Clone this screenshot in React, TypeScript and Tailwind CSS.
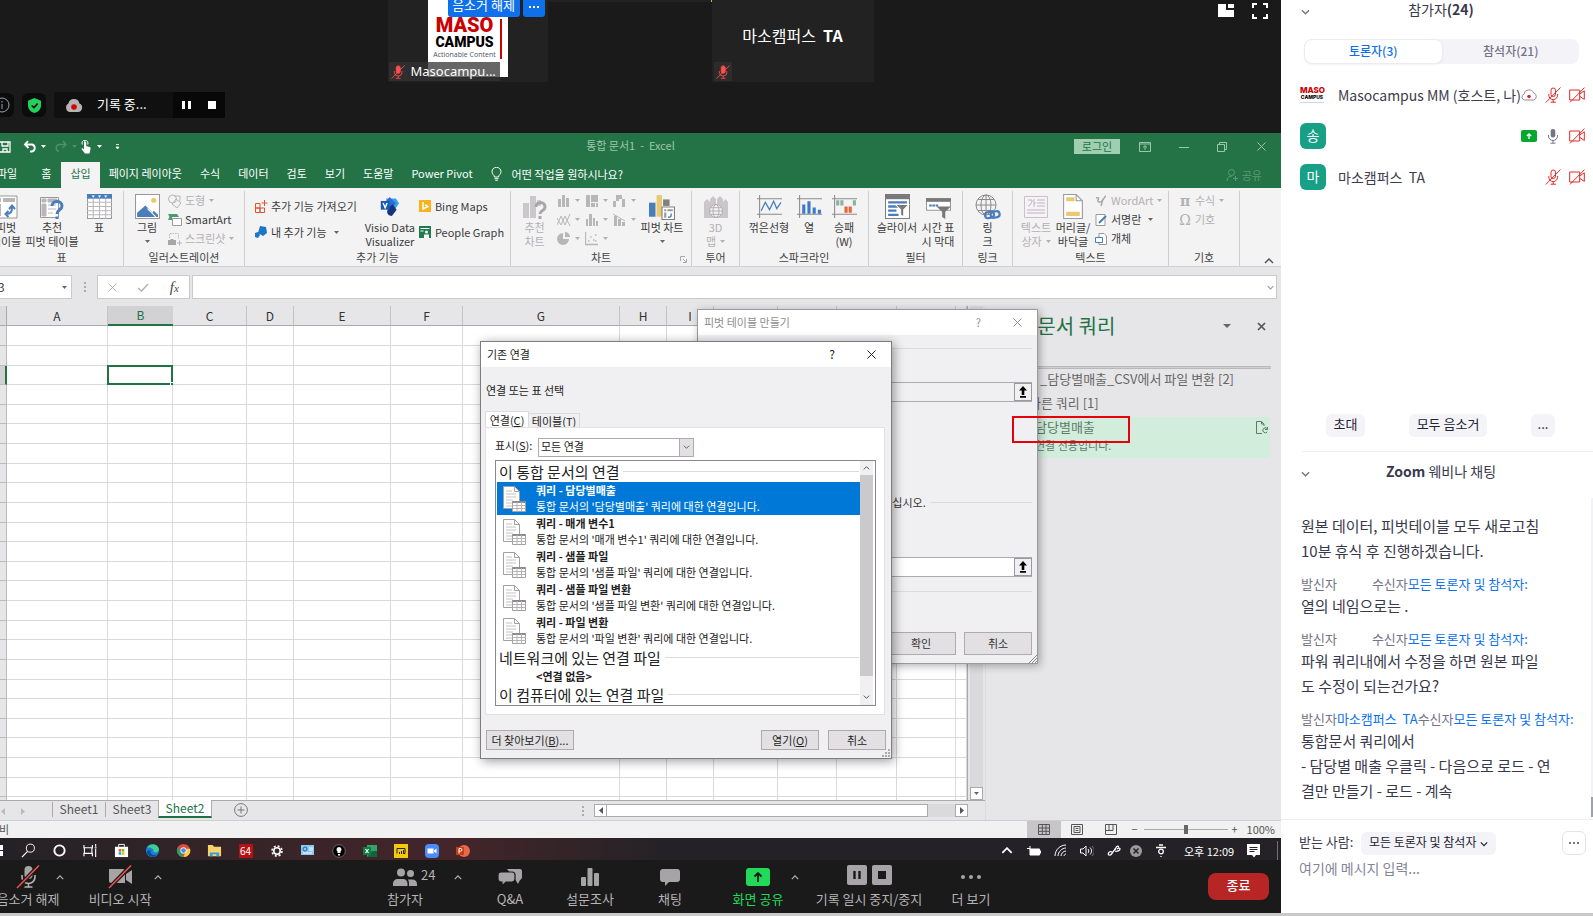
import { useState } from 'react'
import type { ReactNode } from 'react'

const FONT = "font-['Noto_Sans_CJK_KR','Noto_Sans',sans-serif]"
const UI_FONT = "font-['Noto_Sans','Noto_Sans_CJK_KR',sans-serif]"

interface IconProps { className?: string; box?: string; children: ReactNode }

function Icon({ className = 'size-6', box = '0 0 24 24', children }: IconProps) {
  return (
    <svg className={`${className} shrink-0`} viewBox={box} fill="none" stroke="currentColor" aria-hidden="true">
      {children}
    </svg>
  )
}

function Caret({ className = 'text-[#666]' }: { className?: string }) {
  return (
    <Icon className={`w-[5px] h-[3px] ${className}`} box="0 0 5 3">
      <path d="M0 0h5L2.5 3z" fill="currentColor" stroke="none" />
    </Icon>
  )
}

function Chevron({ className, up }: { className?: string; up?: boolean }) {
  return (
    <Icon className={className} box="0 0 10 6">
      <path d={up ? 'M1 5l4-4 4 4' : 'M1 1l4 4 4-4'} strokeWidth="1.5" />
    </Icon>
  )
}

function Close({ className = 'size-[9px]' }: { className?: string }) {
  return (
    <Icon className={className} box="0 0 10 10">
      <path d="M.5.5l9 9M9.5.5l-9 9" strokeWidth="1.1" />
    </Icon>
  )
}

/* ---------- Meeting icons ---------- */

function MicOffSmall({ className = 'size-4 text-[#e02828]', solid }: { className?: string; solid?: boolean }) {
  return (
    <Icon className={className} box="0 0 16 16">
      <rect x="6" y="1" width="4.5" height="8.5" rx="2.2" fill={solid ? 'currentColor' : 'none'} />
      <path d="M3.8 7v1.2a4.4 4.4 0 0 0 8.8 0V7M8.2 12.6V15M5.5 15.2h5.4M15.5.5L.8 15.5" />
    </Icon>
  )
}

function CamOffSmall() {
  return (
    <Icon className="size-4 text-[#e02828]" box="0 0 16 16">
      <path d="M.7 3h10v10h-10zM10.7 7l4.6-3.2v8.6L10.7 9.3M15.5.6L1 15.4" />
    </Icon>
  )
}

function MasoLogo() {
  return (
    <div className="w-6 text-center font-['Inter','Noto_Sans',sans-serif] font-extrabold">
      <div className="text-[8px] leading-[7px] text-[#c00]">MASO</div>
      <div className="-mx-1 text-[5px] leading-[6px] text-black">CAMPUS</div>
      <div className="mx-auto mt-0.5 h-px w-6 bg-gray-300" />
    </div>
  )
}

function VideoStrip() {
  return (
    <header className="relative flex h-[133px] shrink-0 flex-col justify-between bg-[#1a1a1a] text-white">
      <div className="flex justify-center pr-5">
        <div className="relative flex h-[82px] w-40 justify-center bg-[#222]">
          <div className="flex h-[77px] w-20 bg-white pt-[17px] pl-0.5">
            <div className="w-[70px] text-center">
              <div className="font-['Roboto',sans-serif] text-xl leading-[17px] font-black text-[#c00]">MASO</div>
              <div className="font-['Roboto',sans-serif] text-sm leading-4 font-black text-black">CAMPUS</div>
              <div className="font-['Open_Sans',sans-serif] text-[7px] leading-[9px] text-gray-600">Actionable Content</div>
            </div>
            <div className="mt-0.5 h-10 w-0.5 bg-[#c00]" />
          </div>
          <div className="absolute top-0 right-[3px] flex gap-[3px]">
            <button className="h-[17px] w-[72px] rounded-b-[3px] bg-[#0e71eb] pb-[7px] text-[13px] leading-[10px] whitespace-nowrap">음소거 해제</button>
            <button className="flex h-[17px] w-[22px] items-center justify-center gap-0.5 rounded-b-[3px] bg-[#0e71eb] pb-1" aria-label="더 보기">
              <i className="size-0.5 bg-white" /><i className="size-0.5 bg-white" /><i className="size-0.5 bg-white" />
            </button>
          </div>
          <div className={`absolute bottom-px left-px flex h-[19px] w-[111px] items-center gap-1.5 bg-[#333]/75 pl-0.5 ${UI_FONT} text-[13px]`}>
            <MicOffSmall className="size-[14px] text-[#ff4d4d]" solid />
            Masocampu...
          </div>
        </div>
        <div className="h-0.5 w-[164px] border-r border-[#9acd32] bg-[#222]" />
        <div className="relative flex h-[82px] w-[162px] items-center justify-center bg-[#222] pb-3 text-base">
          <span>마소캠퍼스&nbsp; <b>TA</b></span>
          <div className="absolute bottom-px left-0.5 flex h-[19px] w-[18px] items-center justify-center bg-[#2c2c2c]">
            <MicOffSmall className="size-[14px] text-[#ff4d4d]" solid />
          </div>
        </div>
      </div>
      <div className="absolute top-[3px] right-[13px] flex items-center gap-[18px]">
        <Icon className="size-4" box="0 0 16 16">
          <path d="M0 1h8v6h8v7H0zM10 1h6v4h-6z" fill="#fff" stroke="none" />
        </Icon>
        <Icon className="size-4" box="0 0 16 16">
          <path d="M1 5V1h4M11 1h4v4M15 11v4h-4M5 15H1v-4" strokeWidth="2" />
        </Icon>
      </div>
      <div className="mb-[15px] flex items-center gap-2">
        <div className="flex h-6 w-[14px] items-center justify-end rounded-r-md bg-[#0c0c0c] pr-1">
          <Icon className="size-4 text-gray-400" box="0 0 16 16">
            <circle cx="8" cy="8" r="7" /><path d="M8 7v5M8 4v1.6" />
          </Icon>
        </div>
        <div className="flex size-6 items-center justify-center rounded-md bg-[#0c0c0c]">
          <Icon className="h-[15px] w-[13px]" box="0 0 14 16">
            <path d="M7 0l7 3v5c0 4-3 7-7 8-4-1-7-4-7-8V3z" fill="#22d15a" stroke="none" />
            <path d="M4 8l2.4 2.3L10.4 6" stroke="#0c0c0c" strokeWidth="1.8" />
          </Icon>
        </div>
        <div className="flex h-[26px] w-[171px] items-center rounded-xs bg-[#101010] pl-[11px]">
          <Icon className="h-[15px] w-[18px]" box="0 0 18 15">
            <path d="M5 14a4.5 4.5 0 0 1-1.6-8.4A5.7 5.7 0 0 1 14.5 5.4 4.5 4.5 0 0 1 13 14z" fill="#b4b4b4" stroke="none" />
            <circle cx="9" cy="9" r="2.8" fill="#d90000" stroke="none" />
          </Icon>
          <span className="ml-[14px] flex-1 pb-0.5 text-[13px]">기록 중...</span>
          <div className="flex h-full w-[52px] items-center justify-around bg-[#080808]">
            <button className="flex gap-[3px]" aria-label="일시 중지"><i className="h-2 w-[3px] bg-white" /><i className="h-2 w-[3px] bg-white" /></button>
            <button className="size-2 bg-white" aria-label="중지" />
          </div>
        </div>
      </div>
    </header>
  )
}

/* ---------- Excel ---------- */

function TitleBar() {
  return (
    <div className="grid h-[27px] grid-cols-[1fr_auto_1fr] items-center bg-[#237346] text-[#9cc7ad]">
      <div className="flex items-center gap-2 text-white">
        <Icon className="h-3 w-[11px]" box="0 0 11 12">
          <path d="M0 1h10v10H0M2 1v4h6V1M3 11V8h4v3" strokeWidth="1.3" />
        </Icon>
        <div className="ml-1 flex items-center gap-1">
          <Icon className="size-[14px]" box="0 0 14 14"><path d="M5 1L2 4.5 5.5 8M2 4.5h7a3.6 3.6 0 0 1 0 7H7" strokeWidth="1.9" /></Icon>
          <Caret className="text-white" />
        </div>
        <div className="flex items-center gap-1 text-[#4f8f6b]">
          <Icon className="size-[14px]" box="0 0 14 14"><path d="M9 1l3 3.5L8.5 8M12 4.5H5a3.6 3.6 0 0 0 0 7" strokeWidth="1.5" /></Icon>
          <Caret className="text-[#4f8f6b]" />
        </div>
        <div className="-ml-1.5 flex items-center gap-1">
          <Icon className="size-[14px]" box="0 0 14 14">
            <path d="M5 1.5c1.5-.8 2.5.4 2.200 1.500V6l3.500 1c1 .3 1 1 .8 2l-1 4.500H6L2.500 9c0-1 1-1.200 2.500.5z" fill="currentColor" stroke="none" />
            <path d="M3.300 4.500a3 3 0 1 1 5.400 0" />
          </Icon>
          <Caret className="text-white" />
        </div>
        <Icon className="ml-1 h-[6px] w-[7px]" box="0 0 7 6"><path d="M2 .5h3M2 3h3L3.500 5z" fill="currentColor" strokeWidth=".8" /></Icon>
      </div>
      <div className="mr-5 pb-0.5 text-[11px]">통합 문서1 &nbsp;- &nbsp;Excel</div>
      <div className="flex items-center justify-end pr-[15px]">
        <button className="h-[15px] w-[46px] bg-[#9fceb1] pb-px text-[11px] leading-[14px] text-[#237346]">로그인</button>
        <Icon className="ml-[19px] h-[10px] w-3" box="0 0 12 10"><path d="M.5.500h11v9H.5zM.5 2h11M6 8V4M4 5.500L6 3.600l2 1.900" /></Icon>
        <Icon className="ml-7 h-[10px] w-[10px]" box="0 0 10 10"><path d="M0 5.500h10" /></Icon>
        <Icon className="ml-7 h-[10px] w-[10px]" box="0 0 10 10"><path d="M.5 2.500h7v7h-7zM2.500 2V.5h7v7H8" /></Icon>
        <div className="ml-[30px]"><Close /></div>
      </div>
    </div>
  )
}

const TABS = ['홈', '삽입', '페이지 레이아웃', '수식', '데이터', '검토', '보기', '도움말', 'Power Pivot']

function MenuTabs() {
  const [active, setActive] = useState('삽입')
  return (
    <nav className="flex h-7 items-end bg-[#237346] text-[11px] text-white">
      <button className="-ml-[3px] h-[26px] pr-[15px] pb-[3px]">파일</button>
      {TABS.map(t => (
        <button
          key={t}
          onClick={() => setActive(t)}
          className={t === active ? 'ml-px h-[26px] bg-[#f3f3f3] px-[9px] pb-[3px] text-[#217346]' : 'h-[26px] px-[9px] pb-[3px]'}
        >
          {t}
        </button>
      ))}
      <button className="ml-[9px] flex h-[26px] items-center gap-2.5 pb-0.5">
        <Icon className="h-[14px] w-[11px]" box="0 0 11 14"><path d="M3.500 10C3.500 8 1 7.500 1 4.800a4.500 4.500 0 0 1 9 0C10 7.500 7.500 8 7.500 10zM3.500 11.700h4M4.300 13.300h2.400" /></Icon>
        어떤 작업을 원하시나요?
      </button>
      <button className="mr-[19px] ml-auto flex h-[26px] items-center gap-1 text-[#5c9a77]">
        <Icon className="size-3" box="0 0 12 12"><circle cx="5.500" cy="3.500" r="3" /><path d="M1 12c0-3 2-5 5-5M7 9.500h5M9.500 7v5" /></Icon>
        공유
      </button>
    </nav>
  )
}

interface TallProps { icon: ReactNode; lines: string[]; width: string; disabled?: boolean; caret?: 'own' | 'inline' }

function Tall({ icon, lines, width, disabled, caret }: TallProps) {
  return (
    <button className={`flex shrink-0 flex-col items-center pt-[3px] whitespace-nowrap ${width} ${disabled ? 'text-[#b3b0b3]' : 'text-[#3c3c3c]'}`}>
      <span className="mb-px flex h-[25px] items-center">{icon}</span>
      {lines.map((l, i) => (
        <span key={l} className="flex items-center gap-1 leading-[14px]">
          {l}
          {caret === 'inline' && i === lines.length - 1 && <Caret className="text-[#b3b0b3]" />}
        </span>
      ))}
      {caret === 'own' && <span className="flex h-[14px] items-center"><Caret /></span>}
    </button>
  )
}

interface SmallProps { icon: ReactNode; label: string; disabled?: boolean; caret?: boolean; tall?: boolean }

function Small({ icon, label, disabled, caret, tall }: SmallProps) {
  return (
    <button className={`flex items-center gap-[3px] whitespace-nowrap ${tall ? 'h-[26px]' : 'h-[19px]'} ${disabled ? 'text-[#b3b0b3]' : 'text-[#3c3c3c]'}`}>
      <span className="flex w-[14px] justify-center">{icon}</span>
      {label}
      {caret && <Caret className={disabled ? 'ml-px text-[#b3b0b3]' : 'ml-1 text-[#666]'} />}
    </button>
  )
}

function Group({ label, width, children, launcher }: { label: string; width: string; children: ReactNode; launcher?: boolean }) {
  return (
    <section className={`relative mt-[3px] flex shrink-0 flex-col border-r border-[#cfcdcf] ${width}`}>
      <div className="flex flex-1">{children}</div>
      <div className="mb-px text-center leading-[15px] text-[#444]">{label}</div>
      {launcher && (
        <Icon className="absolute right-1 bottom-[3px] size-[7px] text-[#aaa]" box="0 0 7 7"><path d="M.5 5V.5H5M3 3l3.500 3.500M6.500 3v3.500H3" /></Icon>
      )}
    </section>
  )
}

const gray = '#b9b6b9'
const blue = '#4a7ebb'

const pivotIcon = (
  <Icon className="size-6">
    <path d="M1 1h22v22H1z" fill="#fff" stroke="#9a979a" />
    <path d="M3 3h4v4H3zM9 3h12v4H9zM3 9h4v12H3z" fill="#b9b6b9" stroke="none" />
    <path d="M12 19c5 0 6-2 6-7M15 14l3-3.500 3 3.500M14.500 16L11.500 19l3 3" stroke={blue} strokeWidth="2" />
  </Icon>
)
const suggestPivotIcon = (
  <Icon className="size-6">
    <path d="M.5 2.500h18v20H.5z" fill="#fff" stroke="#9a979a" />
    <path d="M2 4h4v3H2zM8 4h9v3H8zM2 9h4v12H2zM8 10h8M8 14h8M8 18h5" fill="#b9b6b9" stroke="#b9b6b9" />
    <path d="M12 11c0-6 10-6 10 0 0 4-5 3.500-5 8M17 21.500v3" stroke={blue} strokeWidth="3" />
  </Icon>
)
const tableIcon = (
  <Icon className="size-[25px]">
    <path d="M.5.500h23v23H.5z" fill="#fff" stroke="#9a979a" />
    <path d="M0 8h24M0 12h24M0 16h24M0 20h24M6 4v20M12 4v20M18 4v20" stroke="#b9b6b9" />
    <path d="M0 0h24v4.500H0z" fill={blue} stroke="none" />
    <path d="M4.500 1.500h3L6 3.500zM10.500 1.500h3L12 3.500zM16.500 1.500h3L18 3.500z" fill="#fff" stroke="none" />
  </Icon>
)
const pictureIcon = (
  <Icon className="size-[25px]">
    <path d="M.5.500h23v23H.5z" fill="#fff" stroke="#9a979a" />
    <path d="M2 22v-4l8-7 7 7 1-2 4 4v2z" fill={blue} stroke="none" />
    <path d="M12 14l8 8" stroke="#fff" />
    <circle cx="18" cy="6" r="2.500" fill="#ecc873" stroke="none" />
  </Icon>
)
const visioIcon = (
  <Icon className="size-[19px]">
    <path d="M8 2h12l4 6-4 6H8z" fill="#3aa0e8" stroke="none" />
    <path d="M12 0l8 8-8 8-6-8z" fill="#2b6fd0" stroke="none" />
    <path d="M10 14l6-5 5 7-6 8c-4 0-6-3-6-5z" fill="#16357f" stroke="none" />
    <path d="M1 5h11v11H1z" fill="#1a58b8" stroke="none" />
    <path d="M4 7.500l2.500 6 2.500-6" stroke="#fff" strokeWidth="1.800" />
  </Icon>
)
const suggestChartIcon = (
  <Icon className="size-6">
    <path d="M0 8h6v15H0zM7 1h6v22H7zM14 5h4v6h-4z" fill="#cbc8cb" stroke="none" />
    <path d="M13 12c0-6 9-6 9 0 0 4-5 3-5 7M17 21v3" stroke="#a9a6a9" strokeWidth="3" />
  </Icon>
)
const pivotChartIcon = (
  <Icon className="size-[26px]">
    <path d="M0 8h6v13H0z" fill={blue} stroke="none" />
    <path d="M7 1h5v20H7z" fill="#ecc873" stroke="none" />
    <path d="M13 5h6v6h-6z" fill="#808080" stroke="none" />
    <path d="M12 12h11.500v11.500H12z" fill="#fff" stroke="#808080" />
    <path d="M14 14h2v2h-2zM17 14h5v2h-5zM14 17h2v5h-2z" fill="#999" stroke="none" />
    <path d="M17.500 21.500c3 0 3-1 3-3.500" stroke={blue} strokeWidth="1.300" />
  </Icon>
)
const map3dIcon = (
  <Icon className="size-6 text-[#b3aeb3]">
    <path d="M0 7l3-3 3 3v16H0zM6 4l3-3 3 3v19H6zM13 4l3-3 3 3v19h-6zM19 7l2.500-3L24 7v16h-5z" fill="#cac6ca" stroke="none" />
    <circle cx="12" cy="16" r="6.500" fill="#f3f3f3" /><ellipse cx="12" cy="16" rx="3" ry="6.500" /><path d="M5.500 16h13M6.500 12.700h11M6.500 19.300h11" />
  </Icon>
)

function SparkFrame({ children }: { children: ReactNode }) {
  return (
    <Icon className="size-[25px]">
      <path d="M0 4.500h24M0 19.500h24M2.500 1v22" stroke="#8c8a8c" />
      {children}
    </Icon>
  )
}

const slicerIcon = (
  <Icon className="size-[25px]">
    <path d="M.5.500h23v23H.5z" fill="#fff" stroke="#808080" />
    <path d="M0 0h24v5H0z" fill="#7a787a" stroke="none" />
    <path d="M3 8h18M3 12h10M3 16h8M3 20h10" stroke={blue} strokeWidth="2.200" />
    <path d="M10 10h13l-5 5v7l-3-2v-5z" fill="#7a787a" stroke="#fff" />
  </Icon>
)
const timelineIcon = (
  <Icon className="size-[25px]">
    <path d="M.5 4.500h23v11H.5z" fill="#fff" stroke="#9a979a" />
    <path d="M0 4h24v3.500H0z" fill="#7a787a" stroke="none" />
    <path d="M3 11h9" stroke={blue} strokeWidth="2" strokeDasharray="2.500 .6" />
    <path d="M10 12h14l-5.500 5v7l-3-2v-5z" fill="#7a787a" stroke="none" />
  </Icon>
)
const linkIcon = (
  <Icon className="size-[26px]" box="0 0 26 26">
    <circle cx="11" cy="11" r="10" stroke="#8c8a8c" /><ellipse cx="11" cy="11" rx="5" ry="10" stroke="#8c8a8c" />
    <path d="M1 11h20M11 1v20M3 5.500h16M3 16.500h16" stroke="#8c8a8c" />
    <rect x="10" y="18" width="9" height="6" rx="3" stroke={blue} strokeWidth="2.200" transform="rotate(-12 14 21)" />
    <rect x="15.500" y="17.500" width="9" height="6" rx="3" stroke={blue} strokeWidth="2.200" transform="rotate(-12 20 20)" />
  </Icon>
)
const textBoxIcon = (
  <Icon className="size-6">
    <path d="M.5 1.500h23v21H.5z" fill="#f6f2f6" stroke="#c9c0c9" />
    <path d="M13 5h8M13 8h8M13 11h8M3 15h18M3 18h18M4 5h4c0 3-1 5-4 6M10 4v8M10 8h2" stroke="#bdb6bd" />
  </Icon>
)
const headerIcon = (
  <Icon className="h-[25px] w-5" box="0 0 19 24">
    <path d="M.5.500h12l6 6v17H.5z" fill="#fff" stroke="#9a979a" /><path d="M12.500.500v6h6" stroke="#9a979a" />
    <path d="M3 3h8v4H3zM3 17h13v4H3z" fill="#ecc873" stroke="none" />
  </Icon>
)

const chartGlyphs: ReactNode[] = [
  <path d="M1 5h3v8H1zM5 1h3v12H5zM9 4h3v9H9z" fill={gray} stroke="none" />,
  <path d="M1 1h4v12H1zM6 1h7v7H6zM6 9h4v4H6zM11 9h2v4h-2z" fill={gray} stroke="none" />,
  <path d="M0 7h3v6H0zM3 1h3v6H3zM6 1h3v4H6zM9 5h3v8H9z" fill={gray} stroke="none" />,
  <path d="M0 12L4 3l4 9 5-11M0 5l4 7 4-9 5 10" stroke={gray} />,
  <path d="M1 6h2v7H1zM4 1h3v12H4zM8 5h2v8H8zM11 8h2v5h-2z" fill={gray} stroke="none" />,
  <><path d="M1 3h3v10H1zM5 6h3v7H5zM9 9h3v4H9z" fill={gray} stroke="none" /><path d="M0 1l12 7" stroke={gray} /></>,
  <path d="M6 1a6 6 0 1 0 6 6H6zM8 0a5 5 0 0 1 5 5H8z" fill={gray} stroke="none" />,
  <path d="M.5 0v12.500H13M3 9h1.500M5 5h1.500M8 8h1.500M10 3h1.500M10 9h1.500" stroke={gray} strokeWidth="1.300" />,
]

function Ribbon() {
  return (
    <div className="relative flex h-[79px] shrink-0 border-b border-[#d2d0d2] bg-[#f3f3f3] text-[11px]">
      <Group label="표" width="w-[124px]">
        <Tall icon={pivotIcon} lines={['피벗', '테이블']} width="w-3" />
        <Tall icon={suggestPivotIcon} lines={['추천', '피벗 테이블']} width="ml-2 w-[64px]" />
        <Tall icon={tableIcon} lines={['표']} width="w-[30px]" />
      </Group>
      <Group label="일러스트레이션" width="w-[121px]">
        <Tall icon={pictureIcon} lines={['그림']} width="w-[46px]" caret="own" />
        <div className="-ml-0.5 flex flex-col">
          <Small disabled caret label="도형" icon={<Icon className="size-[14px]" box="0 0 14 14"><circle cx="4.500" cy="5" r="4" stroke={gray} /><path d="M8 5l5 4-4 5-5-4zM6 2h6v5" stroke={gray} /></Icon>} />
          <Small label="SmartArt" icon={<Icon className="size-[14px]" box="0 0 14 14"><path d="M0 1h9l2 3H4v3H0l1.500-3z" fill="#4a9a78" stroke="none" /><path d="M4.500 5.500h9v7h-9z" fill="#fff" stroke="#999" /></Icon>} />
          <Small disabled caret label="스크린샷" icon={<Icon className="size-[14px]" box="0 0 14 14"><path d="M1.500 6V1.500h9v5" stroke={gray} strokeDasharray="1.500 1" /><path d="M0 8h2l1-1h2l1 1h2v5H0z" fill="#a9a6a9" stroke="none" /><path d="M9 11h5M11.500 8.500v5" stroke={gray} /></Icon>} />
        </div>
      </Group>
      <Group label="추가 기능" width="w-[266px]">
        <div className="ml-[9px] flex flex-col pt-0.5">
          <Small tall label="추가 기능 가져오기" icon={<Icon className="size-[13px] text-[#e0542f]" box="0 0 13 13"><path d="M.5 3.500h4.500V8H.5zM.5 8H5v4.500H.5zM5 8h4.500v4.500H5zM9.500 0v6M6.500 3h6" /></Icon>} />
          <Small tall caret label="내 추가 기능 " icon={<Icon className="size-3" box="0 0 12 12"><path d="M5 0l6 1 1 6-4 3-5-3zM0 7l3-1 2 3-2 3-3-1z" fill="#1b75c9" stroke="none" /></Icon>} />
        </div>
        <Tall icon={visioIcon} lines={['Visio Data', 'Visualizer']} width="ml-1.5 w-[54px]" />
        <div className="ml-px flex flex-col pt-0.5">
          <Small tall label="Bing Maps" icon={<Icon className="size-3" box="0 0 12 12"><path d="M0 0h12v12H0z" fill="#f6b31c" stroke="none" /><path d="M4 2v7l5-2.500L6 5" stroke="#fff" strokeWidth="1.500" /></Icon>} />
          <Small tall label="People Graph" icon={<Icon className="size-3" box="0 0 12 12"><path d="M0 0h12v12H0z" fill="#1f7a4d" stroke="none" /><path d="M1.500 2.500h9M1.500 5h3" stroke="#fff" /><circle cx="7.500" cy="6" r="1.500" fill="#fff" stroke="none" /><path d="M5 12V8.500h5V12z" fill="#fff" stroke="none" /></Icon>} />
        </div>
      </Group>
      <Group label="차트" width="w-[181px]" launcher>
        <Tall disabled icon={suggestChartIcon} lines={['추천', '차트']} width="w-[47px]" />
        <div className="-ml-px grid grid-cols-3 content-start">
          {chartGlyphs.map((g, i) => (
            <button key={i} className="flex h-[19px] w-7 items-center gap-1" aria-label="차트 삽입">
              <Icon className="size-[14px]" box="0 0 14 14">{g}</Icon>
              <Caret className="text-[#b3b0b3]" />
            </button>
          ))}
        </div>
        <Tall icon={pivotChartIcon} lines={['피벗 차트']} width="w-[42px]" caret="own" />
      </Group>
      <Group label="투어" width="w-12">
        <Tall disabled icon={map3dIcon} lines={['3D', '맵']} width="w-full" caret="inline" />
      </Group>
      <Group label="스파크라인" width="w-[129px]">
        <Tall icon={<SparkFrame><path d="M4 16l4-8 4 7 4-8 3 7 4-6" stroke={blue} strokeWidth="1.200" /></SparkFrame>} lines={['꺾은선형']} width="ml-2 w-[42px]" />
        <Tall icon={<SparkFrame><path d="M5 10h3v9H5zM10 7h3v12h-3zM15 13h3v6h-3zM20 15h3v4h-3z" fill="#3b79c9" stroke="none" /></SparkFrame>} lines={['열']} width="w-[38px]" />
        <Tall icon={<SparkFrame><path d="M4 6h3v5H4zM8 6h3v5H8zM20 6h3v5h-3z" fill="#8ab39d" stroke="none" /><path d="M12 12h3v6h-3zM16 12h3v6h-3z" fill="#e8643a" stroke="none" /></SparkFrame>} lines={['승패', '(W)']} width="w-8" />
      </Group>
      <Group label="필터" width="w-[94px]">
        <Tall icon={slicerIcon} lines={['슬라이서']} width="ml-[7px] w-[42px]" />
        <Tall icon={timelineIcon} lines={['시간 표', '시 막대']} width="w-10" />
      </Group>
      <Group label="링크" width="w-[50px]">
        <Tall icon={linkIcon} lines={['링', '크']} width="w-full" />
      </Group>
      <Group label="텍스트" width="w-[156px]">
        <Tall disabled icon={textBoxIcon} lines={['텍스트', '상자']} width="ml-[3px] w-10" caret="inline" />
        <Tall icon={headerIcon} lines={['머리글/', '바닥글']} width="w-[34px]" />
        <div className="ml-1 flex flex-col">
          <Small disabled caret label="WordArt" icon={<Icon className="size-3" box="0 0 12 12"><path d="M1 3c3-1 3 0 2 2s2 3 4 1 3-5 4-5M6 11l2-7" stroke="#a9a6a9" strokeWidth="1.500" /></Icon>} />
          <Small caret label="서명란 " icon={<Icon className="size-3" box="0 0 12 12"><path d="M1 .5h9v11H1z" fill="#fff" stroke="#999" /><path d="M4 9l7-7" stroke={blue} strokeWidth="2" /></Icon>} />
          <Small label="개체" icon={<Icon className="size-3" box="0 0 12 12"><path d="M4 .5h5l2.500 2.500v8.500H4z" fill="#fff" stroke="#999" /><path d="M.5 4.500h7v5h-7z" fill="#fff" stroke={blue} /></Icon>} />
        </div>
      </Group>
      <Group label="기호" width="w-[71px]">
        <div className="ml-[9px] flex flex-col">
          <Small disabled caret label="수식 " icon={<span className="font-['DejaVu_Serif',serif] text-sm leading-4 font-bold">π</span>} />
          <Small disabled label="기호" icon={<span className="font-['DejaVu_Serif',serif] text-sm leading-4">Ω</span>} />
        </div>
      </Group>
      <button className="absolute right-[7px] bottom-0.5" aria-label="리본 축소"><Chevron up className="h-[6px] w-[10px] text-[#555]" /></button>
    </div>
  )
}

function FormulaBar() {
  return (
    <div className="flex h-[39px] shrink-0 items-start bg-[#e6e6e8] pt-2 pr-1">
      <div className="flex h-6 w-[72px] items-center justify-between border border-l-0 border-[#cbc9cb] bg-white pr-1 text-xs text-[#444]">
        <span className="-ml-0.5">3</span><Caret />
      </div>
      <div className="flex h-6 w-[25px] flex-col items-center justify-center gap-0.5">
        <i className="size-0.5 bg-[#aaa]" /><i className="size-0.5 bg-[#aaa]" /><i className="size-0.5 bg-[#aaa]" />
      </div>
      <div className="mr-0.5 flex h-6 w-[93px] items-center justify-around border border-[#cbc9cb] bg-white text-[#b5b3b5]">
        <Close />
        <Icon className="h-[9px] w-3" box="0 0 12 9"><path d="M1 5l3.500 3L11 1" strokeWidth="1.500" /></Icon>
        <span className="font-['Liberation_Serif',serif] text-[15px] leading-5 text-[#444] italic">f<span className="text-[11px]">x</span></span>
      </div>
      <label className="flex h-6 flex-1 items-center border border-[#cbc9cb] bg-white pr-0.5">
        <input className="h-full w-full px-1 text-xs outline-none" aria-label="수식 입력줄" />
        <Chevron className="h-[5px] w-[7px] text-[#999]" />
      </label>
    </div>
  )
}

const COLS = [
  { n: 'A', w: 'w-[101px]' }, { n: 'B', w: 'w-[65px]' }, { n: 'C', w: 'w-[74px]' }, { n: 'D', w: 'w-[47px]' },
  { n: 'E', w: 'w-[97px]' }, { n: 'F', w: 'w-[72px]' }, { n: 'G', w: 'w-[157px]' }, { n: 'H', w: 'w-[47px]' },
  { n: 'I', w: 'w-[47px]' }, { n: 'J', w: 'w-[64px]' }, { n: 'K', w: 'w-[59px]' }, { n: 'L', w: 'w-[60px]' },
  { n: 'M', w: 'w-[59px]' }, { n: '', w: 'w-[11px]' },
]
const ROWS = Array.from({ length: 25 }, (_, i) => i)

function Sheet() {
  return (
    <div className="min-h-0 flex-1 overflow-hidden">
      <table className="w-[967px] table-fixed border-separate border-spacing-0 border-r border-[#aaa]">
        <thead>
          <tr className="h-5 text-xs text-[#333]">
            <th className="w-[7px] border-r border-b border-[#a9a9a9] bg-[#dcdcdc]" />
            {COLS.map(c => (
              <th
                key={c.n}
                className={`${c.w} p-0 leading-4 font-normal ${c.n === 'B' ? 'border-b-2 border-[#217346] bg-[#d2d1d3] text-[#217346]' : 'border-r border-b border-r-[#c4c4c4] border-b-[#a9a9a9] bg-[#e6e6e8]'}`}
              >
                {c.n}
              </th>
            ))}
          </tr>
        </thead>
        <tbody>
          {ROWS.map(r => (
            <tr key={r} className={[2, 4, 7].includes(r % 8) ? 'h-[19px]' : 'h-5'}>
              <td className={r === 2 ? 'border-r-2 border-b border-[#217346] border-b-[#bbb] bg-[#d2d1d3] p-0' : 'border-r border-b border-[#bbb] bg-[#e6e6e8] p-0'} />
              {COLS.map(c => (
                <td key={c.n} className="relative border-r border-b border-[#d9d9d9] bg-white p-0">
                  {r === 2 && c.n === 'B' && (
                    <div className="absolute -inset-px border-2 border-[#217346]">
                      <i className="absolute -right-[3px] -bottom-[3px] size-1 border-t border-l border-white bg-[#217346]" />
                    </div>
                  )}
                </td>
              ))}
            </tr>
          ))}
        </tbody>
      </table>
    </div>
  )
}

function SheetTabs() {
  return (
    <div className="flex h-5 items-start border-t border-[#a9a9a9] bg-[#e6e6e8] text-xs text-[#555]">
      <div className="flex h-4 w-[52px] items-center gap-4 pt-1 text-[#bbb]">
        <Icon className="h-[7px] w-[5px]" box="0 0 5 7"><path d="M5 0v7L1 3.500z" fill="currentColor" stroke="none" /></Icon>
        <Icon className="h-[7px] w-[5px]" box="0 0 5 7"><path d="M0 0v7l4-3.500z" fill="currentColor" stroke="none" /></Icon>
      </div>
      <button className="mt-px h-[15px] w-[54px] border-x border-[#aaa] pb-0.5 leading-3">Sheet1</button>
      <button className="mt-px h-[15px] w-[52px] pb-0.5 leading-3">Sheet3</button>
      <button className="-mt-px h-[18px] w-[54px] border-x border-b-2 border-[#aaa] border-b-[#217346] bg-white leading-4 text-[#217346]">Sheet2</button>
      <button className="ml-[22px] pt-0.5" aria-label="새 시트">
        <Icon className="size-[14px] text-[#777]" box="0 0 14 14"><circle cx="7" cy="7" r="6.400" /><path d="M3.500 7h7M7 3.500v7" /></Icon>
      </button>
      <div className="mt-[3px] mr-[17px] ml-auto flex h-[13px] items-center">
        <div className="mr-2.5 flex flex-col gap-0.5"><i className="size-0.5 bg-[#aaa]" /><i className="size-0.5 bg-[#aaa]" /><i className="size-0.5 bg-[#aaa]" /></div>
        <div className="flex h-[13px] w-[374px] bg-[#dad9db]">
          <button className="flex w-[13px] items-center justify-center border border-[#aaa] bg-white text-[#555]" aria-label="왼쪽으로">
            <Icon className="h-[7px] w-1" box="0 0 4 7"><path d="M4 0v7L0 3.500z" fill="currentColor" stroke="none" /></Icon>
          </button>
          <div className="w-[321px] border border-l-0 border-[#aaa] bg-white" />
          <button className="ml-auto flex w-[13px] items-center justify-center border border-[#aaa] bg-white text-[#555]" aria-label="오른쪽으로">
            <Icon className="h-[7px] w-1" box="0 0 4 7"><path d="M0 0v7l4-3.500z" fill="currentColor" stroke="none" /></Icon>
          </button>
        </div>
      </div>
    </div>
  )
}

function QueryPane() {
  return (
    <aside className="w-[296px] shrink-0 border-l border-[#dcdadc] bg-[#e6e6e8] text-[13px] whitespace-nowrap text-[#666]">
      <div className="flex h-[60px] items-start pt-[7px] pr-[15px] pl-[10px]">
        <h2 className="text-xl leading-[26px] text-[#217346]">통합 문서 쿼리</h2>
        <div className="ml-auto flex h-[26px] items-center gap-[26px]">
          <Icon className="h-1 w-2 text-[#666]" box="0 0 8 4"><path d="M0 0h8L4 4z" fill="currentColor" stroke="none" /></Icon>
          <Icon className="size-[9px] text-[#555]" box="0 0 9 9"><path d="M1 1l7 7M8 1l-7 7" strokeWidth="1.700" /></Icon>
        </div>
      </div>
      <div className="mr-[10px] h-[3px] border-y border-[#b9b9b9] bg-[#d0d0d0]" />
      <div className="pl-[54px] leading-5">_담당별매출_CSV에서 파일 변환 [2]</div>
      <div className="pl-[43px] leading-[28px]">다른 쿼리 [1]</div>
      <div className="mr-[11px] flex h-[41px] justify-between bg-[#d3eddc] pt-px pr-0.5 pl-[49px] text-[#5d7a6b]">
        <div>
          <div className="leading-[18px]">담당별매출</div>
          <div className="text-[11px] leading-[18px]">연결 전용입니다.</div>
        </div>
        <Icon className="mt-[3px] h-[13px] w-3" box="0 0 12 13"><path d="M6 12.500H.5V.5h5L8 3v2M5.500.5V3H8M11.500 8a2.500 2.500 0 1 0-.3 3M11.500 6v2.500H9" /></Icon>
      </div>
    </aside>
  )
}

function StatusBar() {
  return (
    <footer className="flex h-[18px] shrink-0 items-center justify-between border-t border-[#cfcfcf] bg-[#f1f1f1] text-[11px] text-[#555]">
      <span className="-ml-[11px]">준비</span>
      <div className="flex items-center pr-[6px]">
        <button className="flex h-[17px] w-[34px] items-center justify-center bg-[#c8c5c9]" aria-label="기본"><Icon className="h-[11px] w-3" box="0 0 12 11"><path d="M.5.500h11v10H.5zM.5 4h11M.5 7.300h11M4.300.500v10M8 .5v10" /></Icon></button>
        <button className="flex w-[33px] justify-center" aria-label="페이지 레이아웃"><Icon className="h-[11px] w-3" box="0 0 12 11"><path d="M.5.500h11v10H.5zM3 2.500h6v6H3zM4.500 4.500h3M4.500 6.500h3" /></Icon></button>
        <button className="flex w-[34px] justify-center" aria-label="페이지 나누기 미리 보기"><Icon className="h-[11px] w-3" box="0 0 12 11"><path d="M.5.500h11v10H.5zM4 .5v6h4v-6M.5 6.500H4" /></Icon></button>
        <span className="ml-1 w-3">−</span>
        <input
          type="range"
          defaultValue={50}
          aria-label="확대/축소"
          className="h-px w-[84px] appearance-none bg-[#aaa] [&::-webkit-slider-thumb]:h-[9px] [&::-webkit-slider-thumb]:w-1 [&::-webkit-slider-thumb]:appearance-none [&::-webkit-slider-thumb]:bg-[#666]"
        />
        <span className="ml-1 w-[15px]">+</span>
        <span>100%</span>
      </div>
    </footer>
  )
}

/* ---------- Dialogs ---------- */

function UpButton() {
  return (
    <button className="flex h-full w-[18px] items-center justify-center border border-[#9a98a0] bg-[#f0eff1] text-black" aria-label="범위 선택">
      <Icon className="h-3 w-2" box="0 0 8 12"><path d="M4 0l4 4.500H5.300V9H2.700V4.500H0zM1 10h6v1.800H1z" fill="currentColor" stroke="none" /></Icon>
    </button>
  )
}

const DIALOG_BTN = 'border border-[#adabae] bg-[#e2e0e3] pb-px text-center leading-4'

function PivotDialog() {
  return (
    <div className="absolute top-[176px] left-[697px] flex h-[355px] w-[341px] flex-col border border-[#9a9a9a] bg-[#f0eff1] text-[11px] text-[#333] shadow-[2px_2px_8px_rgba(0,0,0,0.3)]" role="dialog" aria-label="피벗 테이블 만들기">
      <div className="flex h-[25px] shrink-0 items-center bg-white pr-[15px] pb-px pl-1.5 text-[#8f8d90]">
        피벗 테이블 만들기
        <span className="mr-8 ml-auto">?</span>
        <Close />
      </div>
      <div className="flex flex-1 flex-col px-[5px] pb-2">
        <div className="mt-[13px] border-t border-[#dcdadd]" />
        <div className="mt-[33px] flex h-5 justify-end border border-r-0 border-[#adabae]"><UpButton /></div>
        <div className="mt-[92px] flex items-center gap-1 pl-[5px] leading-4 whitespace-nowrap">
          피벗 테이블 보고서를 넣을 위치를 선택하십시오.
          <span className="flex-1 border-t border-[#dcdadd]" />
        </div>
        <div className="mt-[47px] flex h-5 border border-r-0 border-[#adabae] bg-white">
          <input className="min-w-0 flex-1" aria-label="위치" />
          <UpButton />
        </div>
        <div className="mt-[14px] border-t border-[#dcdadd]" />
        <div className="mt-auto flex justify-end gap-2">
          <button className={`${DIALOG_BTN} h-[23px] w-[70px]`}>확인</button>
          <button className={`${DIALOG_BTN} h-[23px] w-[68px]`}>취소</button>
        </div>
      </div>
      <Icon className="absolute right-0 bottom-0 size-2 text-[#888]" box="0 0 8 8"><path d="M0 8l8-8M3 8l5-5M6 8l2-2" /></Icon>
    </div>
  )
}

const QUERIES = ['담당별매출', '매개 변수1', '샘플 파일', '샘플 파일 변환', '파일 변환']

function QueryFileIcon() {
  return (
    <Icon className="h-[26px] w-[23px]" box="0 0 23 26">
      <path d="M.5.500h11l5 5v17H.5z" fill="#fff" stroke="#a2a0a2" /><path d="M11.500.500v5h5" stroke="#a2a0a2" />
      <path d="M3 5h6M3 8h10M3 11h10M3 14h7M3 17h6M3 20h6" stroke="#c4c2c4" />
      <path d="M9.500 15.500h13v10h-13z" fill="#fff" stroke="#a2a0a2" /><path d="M9.500 16h13" stroke="#8c8a8c" strokeWidth="2" />
      <path d="M9.500 19.500h13M9.500 22.500h13M14 16v9.500M18.500 16v9.500" stroke="#b5b3b5" />
    </Icon>
  )
}

function ListHeading({ children }: { children: ReactNode }) {
  return (
    <div className="flex h-[21px] items-center gap-1 pl-0.5 text-[15px] leading-5 whitespace-nowrap text-[#222]">
      {children}
      <span className="mr-px flex-1 border-t border-[#dddbde]" />
    </div>
  )
}

function ConnectionsDialog() {
  const [selected, setSelected] = useState(0)
  return (
    <div className="absolute top-[208px] left-[480px] flex h-[418px] w-[412px] flex-col border border-[#7d7d7d] bg-[#f0eff1] text-[11px] text-[#222] shadow-[2px_2px_10px_rgba(0,0,0,0.4)]" role="dialog" aria-label="기존 연결">
      <div className="flex h-[25px] shrink-0 items-center bg-white pr-[15px] pb-px pl-1.5">
        기존 연결
        <span className="mr-8 ml-auto text-xs">?</span>
        <Close />
      </div>
      <div className="mt-[15px] pl-[5px] leading-4">연결 또는 표 선택</div>
      <div className="mt-[13px] flex items-end pl-1">
        <button className="-mb-px h-[17px] w-[44px] border border-b-0 border-[#dcdadd] bg-white leading-[14px]">연결(<u>C</u>)</button>
        <button className="h-[14px] w-[51px] border border-b-0 border-l-0 border-[#dcdadd] leading-3">테이블(<u>T</u>)</button>
      </div>
      <div className="mr-1.5 ml-1 flex h-[288px] w-[400px] flex-col border border-[#e2e0e3] bg-white px-[9px] pt-[9px]">
        <div className="flex items-center">
          <label htmlFor="scope" className="w-[43px] pb-1 leading-4">표시(<u>S</u>):</label>
          <div className="relative">
            <select id="scope" className="block h-[19px] w-[156px] appearance-none border border-[#adabae] bg-white pb-0.5 pl-0.5 leading-[14px]">
              <option>모든 연결</option>
            </select>
            <span className="pointer-events-none absolute inset-y-0 right-0 flex w-[15px] items-center justify-center border border-[#adabae] bg-[#e2e0e3]">
              <Chevron className="h-1 w-[7px] text-[#666]" />
            </span>
          </div>
        </div>
        <div className="mt-[3px] flex h-[246px] w-[381px] border border-[#8a888b]">
          <div className="min-w-0 flex-1 pl-px">
            <ListHeading>이 통합 문서의 연결</ListHeading>
            <ul>
              {QUERIES.map((q, i) => (
                <li key={q}>
                  <button
                    onClick={() => setSelected(i)}
                    className={`flex h-[33px] w-full items-start gap-2.5 pl-[6px] text-left ${i === selected ? 'bg-[#0078d7] text-white' : ''}`}
                  >
                    <span className="mt-1"><QueryFileIcon /></span>
                    <span>
                      <span className="block leading-4 font-bold">쿼리 - {q}</span>
                      <span className="block leading-[17px]">통합 문서의 '{q}' 쿼리에 대한 연결입니다.</span>
                    </span>
                  </button>
                </li>
              ))}
            </ul>
            <ListHeading>네트워크에 있는 연결 파일</ListHeading>
            <div className="pl-[39px] leading-4 font-bold">&lt;연결 없음&gt;</div>
            <ListHeading>이 컴퓨터에 있는 연결 파일</ListHeading>
          </div>
          <div className="mr-0.5 flex w-[13px] flex-col items-center bg-[#f0eff1] text-[#555]">
            <Chevron up className="my-[5px] h-1 w-[7px]" />
            <div className="h-[201px] w-full bg-[#cbc9cc]" />
            <Chevron className="mt-auto mb-1.5 h-1 w-[7px]" />
          </div>
        </div>
      </div>
      <div className="mt-auto mb-2 flex gap-[9px] px-[5px]">
        <button className={`${DIALOG_BTN} h-5 w-[88px]`}>더 찾아보기(<u>B</u>)...</button>
        <button className={`${DIALOG_BTN} ml-auto h-5 w-[58px]`}>열기(<u>O</u>)</button>
        <button className={`${DIALOG_BTN} h-5 w-[58px]`}>취소</button>
      </div>
      <Icon className="absolute right-px bottom-px size-2 text-[#aaa]" box="0 0 8 8"><path d="M6 1h2M3 4h2M6 4h2M0 7h2M3 7h2M6 7h2" strokeWidth="2" /></Icon>
    </div>
  )
}

function ExcelWindow() {
  return (
    <main className="relative flex min-h-0 flex-1 flex-col overflow-hidden">
      <TitleBar />
      <MenuTabs />
      <Ribbon />
      <FormulaBar />
      <div className="flex min-h-0 flex-1 bg-[#e6e6e8]">
        <div className="flex min-w-0 flex-1 flex-col">
          <div className="flex min-h-0 flex-1">
            <Sheet />
            <div className="mr-0.5 flex w-[13px] flex-col justify-end bg-[#dad9db]">
              <button className="flex h-[13px] items-center justify-center border border-[#aaa] bg-white" aria-label="아래로"><Caret /></button>
            </div>
          </div>
          <SheetTabs />
        </div>
        <QueryPane />
      </div>
      <StatusBar />
      <PivotDialog />
      <ConnectionsDialog />
      <div className="pointer-events-none absolute top-[283px] left-[1012px] h-[27px] w-[118px] border-2 border-red-600" />
    </main>
  )
}

/* ---------- Windows taskbar ---------- */

const APPS: { name: string; icon: ReactNode }[] = [
  { name: '검색', icon: <><circle cx="10" cy="5.500" r="4.300" /><path d="M7 9l-6 6" strokeWidth="1.300" /></> },
  { name: 'Cortana', icon: <circle cx="8" cy="8" r="5.500" strokeWidth="2" /> },
  { name: '작업 보기', icon: <path d="M1 2v3h9V2M1 14v-3h9v3M1.500 5v6M9.500 5v6M13.500 1v3M13.500 6v9M12.500 5h2" strokeWidth="1.200" /> },
  { name: 'Store', icon: <><path d="M1 4h14v11H1z" fill="#fff" stroke="none" /><path d="M5 4V1.500h6V4" /><path d="M5 6.500h2.700v2.700H5z" fill="#e8502a" stroke="none" /><path d="M8.300 6.500H11v2.700H8.300z" fill="#7fba00" stroke="none" /><path d="M5 9.800h2.700v2.700H5z" fill="#1aa0e8" stroke="none" /><path d="M8.300 9.800H11v2.700H8.300z" fill="#f8b700" stroke="none" /></> },
  { name: 'Edge', icon: <><circle cx="8" cy="8" r="7" fill="#1b7fd6" stroke="none" /><path d="M2 5c3-5 12-5 13 2 0 3-4 4-6 2 1-3-3-5-7-4z" fill="#3fcf8e" stroke="none" /><path d="M6 8c-1 4 3 6 7 4-3 4-8 3-10 0s0-5 3-4z" fill="#0c4a94" stroke="none" /></> },
  { name: 'Chrome', icon: <><circle cx="8" cy="8" r="7" fill="#dd4b3e" stroke="none" /><path d="M1.900 4.500L8 15A7 7 0 0 1 1.900 4.500z" fill="#1da462" stroke="none" /><path d="M8 15l3.500-9H15a7 7 0 0 1-7 9z" fill="#ffcd40" stroke="none" /><circle cx="8" cy="8" r="3" fill="#4a8af4" stroke="#fff" /></> },
  { name: '파일 탐색기', icon: <><path d="M1 2h5l1.500 2H15v10H1z" fill="#f7d36b" stroke="none" /><path d="M3 14v-4h10v4h-3v-2H6v2z" fill="#3d9ae0" stroke="none" /></> },
]

function Taskbar() {
  return (
    <div className="flex h-[22px] shrink-0 items-center justify-between bg-linear-to-r from-[#242226] via-[#44252a] via-[35%] to-[#242226] to-[52%] pt-[3px] text-white">
      <div className="flex items-center">
        <Icon className="size-[13px]" box="0 0 13 13"><path d="M0 1h3v5H0zM0 7h3v5H0z" fill="#fff" stroke="none" /></Icon>
        {APPS.map(a => (
          <button key={a.name} className="flex w-[31px] justify-center" aria-label={a.name}>
            <Icon className="size-[15px]" box="0 0 16 16">{a.icon}</Icon>
          </button>
        ))}
        <button className="flex w-[31px] justify-center"><span className="h-[14px] w-[14px] bg-[#b80f14] text-center text-[10px] leading-[14px]">64</span></button>
        <button className="flex w-[31px] justify-center" aria-label="설정"><Icon className="size-3" box="0 0 12 12"><circle cx="6" cy="6" r="3.200" strokeWidth="1.600" /><circle cx="6" cy="6" r="5" strokeWidth="1.500" strokeDasharray="2 1.930" /></Icon></button>
        <button className="flex w-[31px] justify-center" aria-label="제어판"><Icon className="size-[13px]" box="0 0 13 13"><path d="M0 1h13v10H0z" fill="#8cc8f0" stroke="none" /><circle cx="4" cy="5" r="2" stroke="#1a68b0" /><path d="M8 4h4M8 6h4M2 9h9" stroke="#fff" /></Icon></button>
        <button className="flex w-[31px] justify-center" aria-label="메모"><Icon className="size-[14px]" box="0 0 14 14"><circle cx="7" cy="7" r="6.300" fill="#000" stroke="#666" /><path d="M7 3a2.500 2.500 0 0 0-1.500 4.500V9h3V7.500A2.500 2.500 0 0 0 7 3zM6 10h2v1.500H6z" fill="#fff" stroke="none" /></Icon></button>
        <button className="flex w-[31px] justify-center" aria-label="Excel"><Icon className="size-[14px]" box="0 0 14 14"><path d="M4 1h10v12H4z" fill="#2fa56c" stroke="none" /><path d="M9 7h5v6H4z" fill="#14633b" stroke="none" /><path d="M0 3h8v8H0z" fill="#107c41" stroke="none" /><path d="M2.500 5l3 4M5.500 5l-3 4" strokeWidth="1.200" /></Icon></button>
        <button className="flex w-[31px] justify-center" aria-label="Power BI"><Icon className="size-[14px]" box="0 0 14 14"><path d="M0 0h14v14H0z" fill="#f2c811" stroke="none" /><path d="M3 9.500v-5h8v5H9M5.500 10V8M7.500 10V7M9.500 10V6" stroke="#222" /></Icon></button>
        <button className="flex w-[31px] justify-center" aria-label="Zoom"><Icon className="size-[14px]" box="0 0 14 14"><rect width="14" height="14" rx="4" fill="#4a8cff" stroke="none" /><path d="M2.500 4.500h6v5h-6zM9 6.500l2.500-2v5L9 7.500z" fill="#fff" stroke="none" /></Icon></button>
        <button className="flex w-[31px] justify-center" aria-label="PowerPoint"><Icon className="size-[14px]" box="0 0 14 14"><circle cx="8" cy="7" r="6" fill="#e8694a" stroke="none" /><path d="M0 3h8v8H0z" fill="#c43e1c" stroke="none" /><path d="M3 9.500v-5h1.600a1.300 1.300 0 0 1 0 2.700H3" /></Icon></button>
      </div>
      <div className="flex items-center gap-[13px] text-[11px]">
        <Chevron up className="mr-px h-[7px] w-3" />
        <Icon className="h-[10px] w-[14px]" box="0 0 14 10"><path d="M3 3h9.500v6H3zM13 5h1v2h-1z" fill="#fff" /><path d="M0 2.500h3M3 0v4" /></Icon>
        <Icon className="size-[13px]" box="0 0 13 13"><path d="M1 12C1 6 6 1 12 1M4 12c0-4 4-8 8-8M7 12c0-2.500 2.500-5 5-5M10 12c0-1 1-2 2-2" /></Icon>
        <Icon className="size-[14px]" box="0 0 14 14"><path d="M.5 5h2.500l3-3v10L3 9H.5zM8 5c1 1 1 3 0 4M10 3.500c2 2 2 5 0 7" /><path d="M12 2c3 3 3 7 0 10" stroke="#777" /></Icon>
        <Icon className="size-[14px]" box="0 0 14 14"><path d="M9 3.500L4.500 10c-1.500 2-4 1-3-1S5 7.500 6 9M9 3.500c1-2 3-1.500 2.500 0M6.500 7L9 4.500M8 7c2 1 5-.5 5-2s-2-1-3 0" strokeWidth="1.300" /></Icon>
        <Icon className="-ml-1 size-3" box="0 0 12 12"><circle cx="6" cy="6" r="6" fill="#9a9a9a" stroke="none" /><path d="M3.500 3.500l5 5M8.500 3.500l-5 5" stroke="#242226" strokeWidth="1.500" /></Icon>
        <Icon className="h-[13px] w-3" box="0 0 12 13"><path d="M4 1h4M1 3.500h10M6 12v1" strokeWidth="1.300" /><circle cx="6" cy="7.500" r="2.300" strokeWidth="1.300" /></Icon>
        <span className="ml-1 w-12 leading-4 whitespace-nowrap">오후 12:09</span>
        <Icon className="ml-0.5 h-[14px] w-[13px]" box="0 0 13 14"><path d="M0 0h13v11H9l-2 2.500L5 11H0z" fill="#fff" stroke="none" /><path d="M2.500 3.500h8M2.500 5.500h8M2.500 7.500h5" stroke="#242226" /></Icon>
        <i className="mr-[3px] ml-1 h-[19px] w-px bg-gray-500" />
      </div>
    </div>
  )
}

/* ---------- Zoom control bar ---------- */

function Control({ label, width, children, count, green }: { label: string; width: string; children: ReactNode; count?: number; green?: boolean }) {
  return (
    <button className={`flex shrink-0 flex-col items-center whitespace-nowrap ${width} ${green ? 'text-[#23d959]' : 'text-[#b5b3b5]'}`}>
      <span className="relative flex h-7 items-center">
        {children}
        {count && <span className="absolute top-1 left-full ml-1 text-[13px] leading-4">{count}</span>}
      </span>
      <span className="text-[13px] leading-4">{label}</span>
    </button>
  )
}

function MoreCaret() {
  return (
    <button className="flex h-7 w-2 items-center" aria-label="옵션">
      <Chevron up className="h-[5px] w-2 text-[#b5b3b5]" />
    </button>
  )
}

function ControlBar() {
  return (
    <div className="flex h-[53px] shrink-0 items-start justify-between bg-[#1a1a1a] pt-[3px] pr-3">
      <div className="flex">
        <Control label="음소거 해제" width="w-14">
          <Icon className="size-6">
            <rect x="8.500" y="1" width="8" height="13" rx="4" fill="#a6a4a6" stroke="none" />
            <path d="M6 10v2a6.500 6.500 0 0 0 13 0v-2M12.500 18v4M8.500 22h8" strokeWidth="1.600" />
            <path d="M23 .5L1 23" stroke="#1a1a1a" strokeWidth="4" /><path d="M23 .5L1 23" stroke="#f0524f" strokeWidth="1.500" />
          </Icon>
        </Control>
        <MoreCaret />
        <Control label="비디오 시작" width="ml-[22px] w-[68px]">
          <Icon className="size-6">
            <path d="M1 4h14a2 2 0 0 1 2 2v12H3a2 2 0 0 1-2-2zM18 9l6-4v14l-6-4z" fill="#a6a4a6" stroke="none" />
            <path d="M23 .5L1 23" stroke="#1a1a1a" strokeWidth="4" /><path d="M23 .5L1 23" stroke="#f0524f" strokeWidth="1.500" />
          </Icon>
        </Control>
        <MoreCaret />
      </div>
      <div className="flex gap-4 pl-[6px]">
        <div className="flex gap-[17px]">
          <Control label="참가자" width="w-16" count={24}>
            <Icon className="size-6">
              <circle cx="8" cy="7.500" r="4" fill="#a6a4a6" stroke="none" /><circle cx="17.500" cy="8.500" r="3.500" fill="#a6a4a6" stroke="none" />
              <path d="M0 21v-2c0-3 2-5 5-5h5c3 0 4.500 2 4.500 5v2zM16 21v-3c0-1.500-.5-2.500-1.200-3.500H19c3 0 5 1.500 5 4.500v2z" fill="#a6a4a6" stroke="none" />
            </Icon>
          </Control>
          <MoreCaret />
        </div>
        <Control label="Q&A" width="w-16">
          <Icon className="size-6">
            <path d="M9 4h13a2 2 0 0 1 2 2v6a3 3 0 0 1-2 3l-2 4-3-5" fill="#a6a4a6" stroke="none" />
            <path d="M3 7h11a3 3 0 0 1 3 3v4a3 3 0 0 1-3 3H8l-4 4v-4H3a3 3 0 0 1-3-3v-4a3 3 0 0 1 3-3z" fill="#a6a4a6" stroke="#1a1a1a" strokeWidth="1.200" />
          </Icon>
        </Control>
        <Control label="설문조사" width="w-16">
          <Icon className="size-5" box="0 0 20 20">
            <g fill="#a6a4a6" stroke="none"><rect x="1" y="10" width="5" height="9" rx="1" /><rect x="7.500" y="1" width="5" height="18" rx="1" /><rect x="14" y="6" width="5" height="13" rx="1" /></g>
          </Icon>
        </Control>
        <Control label="채팅" width="w-16">
          <Icon className="size-5" box="0 0 20 20"><path d="M3 2h14a3 3 0 0 1 3 3v7a3 3 0 0 1-3 3H9l-4 4v-4H3a3 3 0 0 1-3-3V5a3 3 0 0 1 3-3z" fill="#a6a4a6" stroke="none" /></Icon>
        </Control>
        <div className="ml-2 flex gap-px">
          <Control label="화면 공유" width="w-16" green>
            <Icon className="h-[18px] w-6" box="0 0 24 18"><rect width="24" height="18" rx="3" fill="#23d959" stroke="none" /><path d="M12 14V5M8.500 8.500L12 5l3.500 3.500" stroke="#1a1a1a" strokeWidth="1.800" /></Icon>
          </Control>
          <MoreCaret />
        </div>
        <Control label="기록 일시 중지/중지" width="w-[108px]">
          <span className="flex gap-[5px] pb-1">
            <Icon className="size-5" box="0 0 20 20"><rect width="20" height="20" rx="2" fill="#a6a4a6" stroke="none" /><path d="M7.500 6v8M12.500 6v8" stroke="#1a1a1a" strokeWidth="2.400" /></Icon>
            <Icon className="size-5" box="0 0 20 20"><rect width="20" height="20" rx="2" fill="#a6a4a6" stroke="none" /><path d="M6 6h8v8H6z" fill="#1a1a1a" stroke="none" /></Icon>
          </span>
        </Control>
        <Control label="더 보기" width="w-16">
          <span className="flex gap-1"><i className="size-1 rounded-full bg-[#a6a4a6]" /><i className="size-1 rounded-full bg-[#a6a4a6]" /><i className="size-1 rounded-full bg-[#a6a4a6]" /></span>
        </Control>
      </div>
      <button className="mt-[10px] h-[27px] w-[61px] rounded-lg bg-[#b82525] pb-1 text-[13px] leading-5 font-medium text-white">종료</button>
    </div>
  )
}

/* ---------- Side panel ---------- */

const AVATAR = 'size-[26px] rounded-md bg-[#17a086] text-center text-sm leading-6 text-white'

function Participants() {
  return (
    <section className="flex h-[452px] shrink-0 flex-col">
      <div className="relative flex h-[22px] items-start justify-center pl-2">
        <button className="absolute top-[9px] left-5 flex" aria-label="접기"><Chevron className="h-[6px] w-[9px] text-[#747487]" /></button>
        <h2 className="text-sm leading-[18px] font-normal text-[#39394d]">참가자<b>(24)</b></h2>
      </div>
      <div className="mt-[17px] mr-[14px] ml-[23px] flex h-[25px] rounded-lg bg-[#f3f3f8] text-xs leading-[22px] font-medium">
        <button className="flex-1 rounded-lg border border-[#ececf2] bg-white pb-px text-[#0e71eb] shadow-xs">토론자(3)</button>
        <button className="flex-1 pb-px text-[#747487]">참석자(21)</button>
      </div>
      <ul className="mt-[10px] pr-2 pl-[19px] text-sm text-[#3c3c4a]">
        <li className="flex h-[41px] items-center">
          <div className="w-[26px]"><MasoLogo /></div>
          <span className="ml-3 flex-1 whitespace-nowrap">Masocampus MM (호스트, 나)</span>
          <div className="flex gap-2">
            <Icon className="size-4 text-[#8a8a9a]" box="0 0 16 16"><path d="M3.500 13a3 3 0 0 1-.5-5.800A5 5 0 0 1 12.600 6 3.600 3.600 0 0 1 12.500 13z" /><circle cx="8" cy="9.500" r="1.800" fill="#e02828" stroke="none" /></Icon>
            <MicOffSmall /><CamOffSmall />
          </div>
        </li>
        <li className="flex h-[41px] items-center justify-between">
          <div className={AVATAR}>송</div>
          <div className="flex gap-2">
            <Icon className="size-4" box="0 0 16 16"><rect y="2" width="16" height="12" rx="2" fill="#07a82f" stroke="none" /><path d="M8 11V6M5.800 8L8 5.800 10.200 8" stroke="#fff" strokeWidth="1.300" /></Icon>
            <Icon className="size-4 text-[#747487]" box="0 0 16 16"><rect x="5.700" y="1" width="4.600" height="8.500" rx="2.300" fill="currentColor" stroke="none" /><path d="M3.500 7v1a4.500 4.500 0 0 0 9 0V7M8 12.600V15M5.500 15.200h5" /></Icon>
            <CamOffSmall />
          </div>
        </li>
        <li className="flex h-[41px] items-center">
          <div className={AVATAR}>마</div>
          <span className="ml-3 flex-1">마소캠퍼스&nbsp; TA</span>
          <div className="flex gap-2"><MicOffSmall /><CamOffSmall /></div>
        </li>
      </ul>
      <div className="mt-auto mb-[14px] flex justify-between pr-[38px] pl-[45px] text-[13px] leading-5 text-[#222230]">
        <button className="h-[23px] w-[39px] rounded-md bg-[#f3f3f8] pb-[3px]">초대</button>
        <button className="h-[23px] w-[78px] rounded-md bg-[#f3f3f8] pb-[3px]">모두 음소거</button>
        <button className="h-[23px] w-6 rounded-md bg-[#f3f3f8] pb-[3px]">...</button>
      </div>
      <div className="ml-[21px] border-b border-[#ededf4]" />
    </section>
  )
}

interface Message { from?: string; lines: string[]; header?: boolean }

const MESSAGES: Message[] = [
  { lines: ['원본 데이터, 피벗테이블 모두 새로고침', '10분 휴식 후 진행하겠습니다.'] },
  { header: true, lines: ['열의 네임으로는 .'] },
  { header: true, lines: ['파워 쿼리내에서 수정을 하면 원본 파일', '도 수정이 되는건가요?'] },
  { header: true, from: '마소캠퍼스\u00a0 TA', lines: ['통합문서 쿼리에서', '- 담당별 매출 우클릭 - 다음으로 로드 - 연', '결만 만들기 - 로드 - 계속'] },
]

function Chat() {
  return (
    <section className="flex min-h-0 flex-1 flex-col">
      <div className="relative mt-[9px] flex h-5 items-center justify-center pl-2">
        <button className="absolute top-[10px] left-5 flex" aria-label="접기"><Chevron className="h-[6px] w-[9px] text-[#747487]" /></button>
        <h2 className="text-sm leading-5 font-normal text-[#39394d]"><b>Zoom</b> 웨비나 채팅</h2>
      </div>
      <div className="relative mt-[17px] flex min-h-0 flex-1 flex-col gap-2.5 border-b border-[#ededf4] pt-[15px] pl-5 whitespace-nowrap">
        {MESSAGES.map((m, i) => (
          <div key={i}>
            {m.header && (
              <div className="flex pt-px text-[13px] leading-[19px] text-[#747487]">
                발신자
                {m.from ? <span className="text-[#0e71eb]">{m.from}</span> : <span className="w-[35px]" />}
                수신자
                <span className="text-[#0e71eb]">모든 토론자 및 참석자:</span>
              </div>
            )}
            {m.lines.map(l => <p key={l} className="text-[15px] leading-[25px] text-[#39394d]">{l}</p>)}
          </div>
        ))}
        <div className="absolute top-0 right-0 bottom-0.5 flex w-0.5 flex-col justify-end bg-[#f1f1f6]"><i className="h-5 bg-[#a0a0ac]" /></div>
      </div>
      <form className="h-[93px] shrink-0 pt-[11px] pr-[7px] pl-[18px] text-[13px] text-[#39394d]">
        <div className="flex h-6 items-center">
          <label htmlFor="to" className="w-[62px] pb-0.5 whitespace-nowrap">받는 사람:</label>
          <div className="relative">
            <select id="to" className="block h-[23px] w-[135px] appearance-none rounded-md bg-[#f3f3f8] pb-0.5 pl-2 text-xs leading-5 text-[#222230]">
              <option>모든 토론자 및 참석자</option>
            </select>
            <Chevron className="pointer-events-none absolute top-[9px] right-2 h-[6px] w-2 text-[#222230]" />
          </div>
          <button type="button" className="ml-auto flex size-6 items-center justify-center gap-0.5 rounded-md border border-[#e4e4ed]" aria-label="채팅 옵션">
            <i className="size-0.5 bg-[#747487]" /><i className="size-0.5 bg-[#747487]" /><i className="size-0.5 bg-[#747487]" />
          </button>
        </div>
        <textarea className="mt-px h-10 w-full resize-none text-sm leading-6 outline-none placeholder:text-[#85859a]" placeholder="여기에 메시지 입력..." aria-label="메시지" />
      </form>
    </section>
  )
}

export default function App() {
  return (
    <div className={`flex h-screen flex-col overflow-hidden bg-[#c9c9c9] pb-[3px] ${FONT}`}>
      <div className="flex min-h-0 flex-1">
        <div className="flex min-w-0 flex-1 flex-col overflow-hidden">
          <VideoStrip />
          <ExcelWindow />
          <Taskbar />
          <ControlBar />
        </div>
        <div className="flex w-[312px] shrink-0 flex-col bg-white">
          <Participants />
          <Chat />
        </div>
      </div>
    </div>
  )
}
